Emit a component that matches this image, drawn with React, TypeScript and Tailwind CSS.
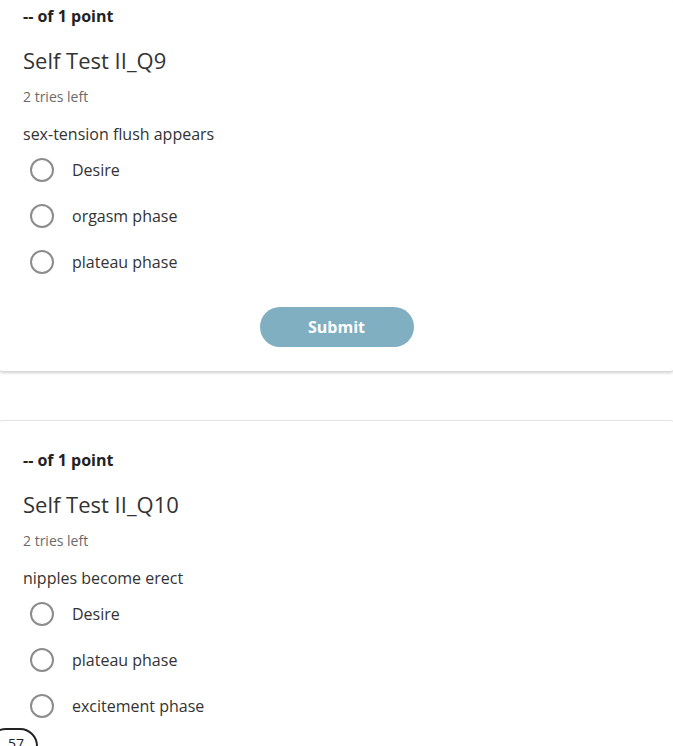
const font = { fontFamily: '"Open Sans", "Liberation Sans", sans-serif' };

type Q = { title: string; question: string; options: string[]; submit?: boolean };

const questions: Q[] = [
  {
    title: "Self Test II_Q9",
    question: "sex-tension flush appears",
    options: ["Desire", "orgasm phase", "plateau phase"],
    submit: true,
  },
  {
    title: "Self Test II_Q10",
    question: "nipples become erect",
    options: ["Desire", "plateau phase", "excitement phase"],
  },
];

function QuestionCard({ q, first }: { q: Q; first?: boolean }) {
  return (
    <div
      className={
        "-mx-px bg-white rounded-sm border-t border-[#e2e2e2] shadow-[0_2px_3px_rgba(0,0,0,0.18)] px-[24px] " +
        (first ? "pt-[4px] pb-[24px] border-t-0" : "pt-[27px] pb-[24px]")
      }
    >
      <div className="text-[16px] leading-[24px] font-bold text-[#222]">-- of 1 point</div>
      <h2 className="mt-[17px] text-[22px] leading-[30px] text-[#333]">{q.title}</h2>
      <div className="mt-[12px] text-[14px] leading-[20px] text-[#6b6b6b]">2 tries left</div>
      <p className="mt-[16px] text-[16px] leading-[22px] text-[#333]">{q.question}</p>
      <ul className="mt-[3px]">
        {q.options.map((o, i) => (
          <li key={o} className={"flex items-center h-[44px] " + (i > 0 ? "mt-[2px]" : "")}>
            <span className="ml-[7px] w-[24px] h-[24px] rounded-full border-2 border-[#8c8c8c] bg-white" />
            <span className="ml-[18px] text-[16px] text-[#333]">{o}</span>
          </li>
        ))}
      </ul>
      {q.submit && (
        <div className="flex justify-center mt-[23px]">
          <button className="w-[154px] h-[40px] rounded-full bg-[#80afc2] text-white text-[16px] font-bold">
            Submit
          </button>
        </div>
      )}
    </div>
  );
}

export default function App() {
  return (
    <div style={font} className="relative w-[673px] h-[746px] overflow-hidden bg-white">
      <QuestionCard q={questions[0]} first />
      <div className="h-[49px]" />
      <QuestionCard q={questions[1]} />
      <div className="absolute left-[-12px] top-[728px] w-[50px] h-[36px] rounded-full border-2 border-[#222] bg-white flex items-start justify-center pl-[6px] text-[14px] leading-[20px] text-[#222] pt-[4px]">
        57
      </div>
    </div>
  );
}
